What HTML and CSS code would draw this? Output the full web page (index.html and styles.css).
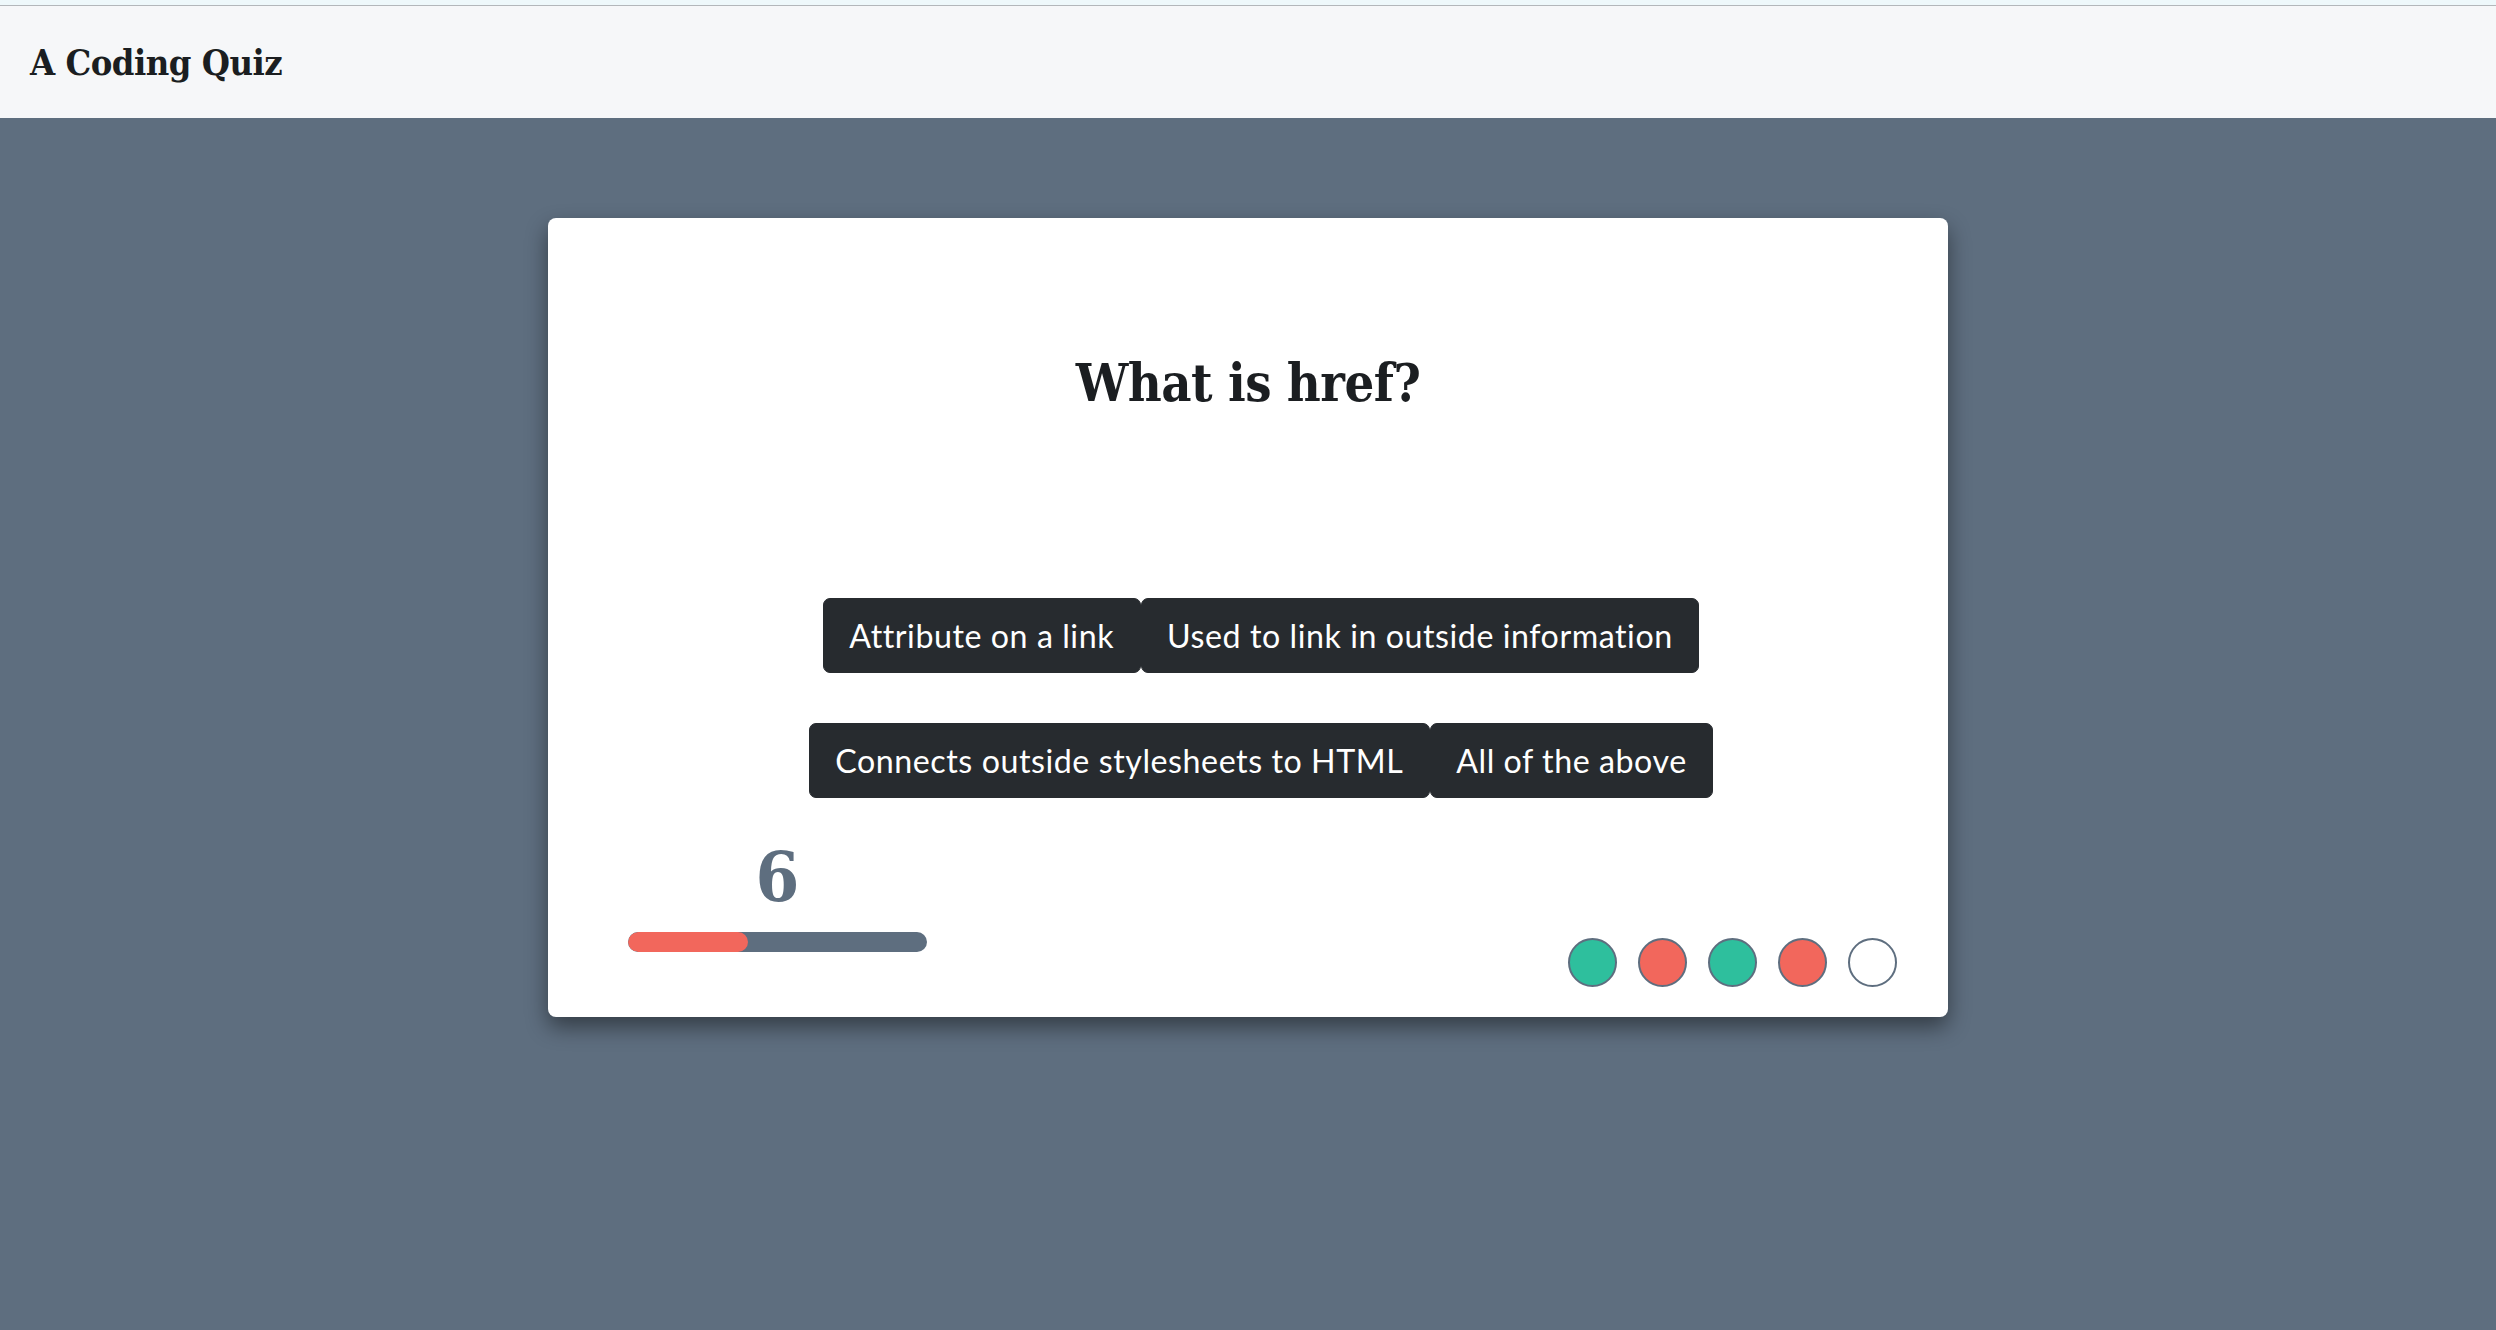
FILE: index.html
```html
<!DOCTYPE html>
<html lang="en">
<head>
<meta charset="utf-8">
<title>A Coding Quiz</title>
<link rel="stylesheet" href="styles.css">
</head>
<body>
<div class="topstrip"></div>
<header class="navbar"><span class="brand">A Coding Quiz</span></header>
<main class="stage">
  <section class="card">
    <h1 class="question">What is href?</h1>
    <div class="answers">
      <div class="answer-row">
        <button class="answer">Attribute on a link</button><button class="answer">Used to link in outside information</button>
      </div>
      <div class="answer-row">
        <button class="answer">Connects outside stylesheets to HTML</button><button class="answer">All of the above</button>
      </div>
    </div>
    <div class="card-footer">
      <div class="timer">
        <div class="count">6</div>
        <div class="bar"><div class="fill" style="width:40%"></div></div>
      </div>
      <div class="dots">
        <span class="dot correct"></span>
        <span class="dot wrong"></span>
        <span class="dot correct"></span>
        <span class="dot wrong"></span>
        <span class="dot"></span>
      </div>
    </div>
  </section>
</main>
</body>
</html>
```
FILE: styles.css
```css
html, body {
  margin: 0;
  padding: 0;
}
body {
  background: #5e6e7f;
  min-height: 100vh;
  font-family: "Lato", "Liberation Sans", sans-serif;
}
.topstrip {
  height: 5px;
  background: #eef8fb;
  border-bottom: 1px solid #b3b7bb;
}
.navbar {
  height: 112px;
  background: #f6f7f9;
  display: flex;
  align-items: center;
  padding-left: 30px;
  box-sizing: border-box;
}
.brand {
  font-family: "DejaVu Serif Condensed", "DejaVu Serif", serif;
  font-stretch: condensed;
  font-weight: bold;
  font-size: 36px;
  color: #1b1e21;
  letter-spacing: -0.5px;
}
.stage {
  padding-top: 100px;
}
.card {
  width: 1400px;
  margin: 0 auto;
  background: #ffffff;
  border-radius: 8px;
  box-shadow: 0 10px 22px rgba(0, 0, 0, 0.45);
}
.question {
  margin: 0;
  padding-top: 135px;
  text-align: center;
  font-family: "DejaVu Serif Condensed", "DejaVu Serif", serif;
  font-stretch: condensed;
  font-weight: bold;
  font-size: 52px;
  line-height: 60px;
  color: #1b1e21;
  letter-spacing: -0.5px;
}
.answers {
  margin-top: 185px;
  padding-left: 26px;
  display: flex;
  flex-direction: column;
  gap: 50px;
}
.answer-row {
  display: flex;
  justify-content: center;
}
.answer {
  font-family: "Lato", "Liberation Sans", sans-serif;
  font-size: 32.2px;
  line-height: 47.7px;
  letter-spacing: 0.55px;
  padding: 12.7px 25.5px;
  background: #272b2f;
  border: 1px solid #272b2f;
  color: #ffffff;
  border-radius: 7px;
  margin: 0;
  cursor: pointer;
}
.card-footer {
  margin-top: 44px;
  padding: 0 51px 30px 80px;
  display: flex;
  justify-content: space-between;
  align-items: flex-end;
}
.timer {
  width: 299px;
  margin-bottom: 35px;
}
.count {
  text-align: center;
  font-family: "DejaVu Serif Condensed", "DejaVu Serif", serif;
  font-stretch: condensed;
  font-weight: bold;
  font-size: 70px;
  line-height: 70px;
  color: #5e6e7f;
}
.bar {
  margin-top: 20px;
  height: 20px;
  border-radius: 10px;
  background: #5e6e7f;
  overflow: hidden;
}
.fill {
  height: 100%;
  background: #f2675c;
  border-radius: 10px;
}
.dots {
  display: flex;
  gap: 21px;
}
.dot {
  width: 49px;
  height: 49px;
  box-sizing: border-box;
  border-radius: 50%;
  border: 2px solid #5e6e7f;
  background: #ffffff;
}
.dot.correct {
  background: #2ebf9d;
}
.dot.wrong {
  background: #f2675c;
}
```
